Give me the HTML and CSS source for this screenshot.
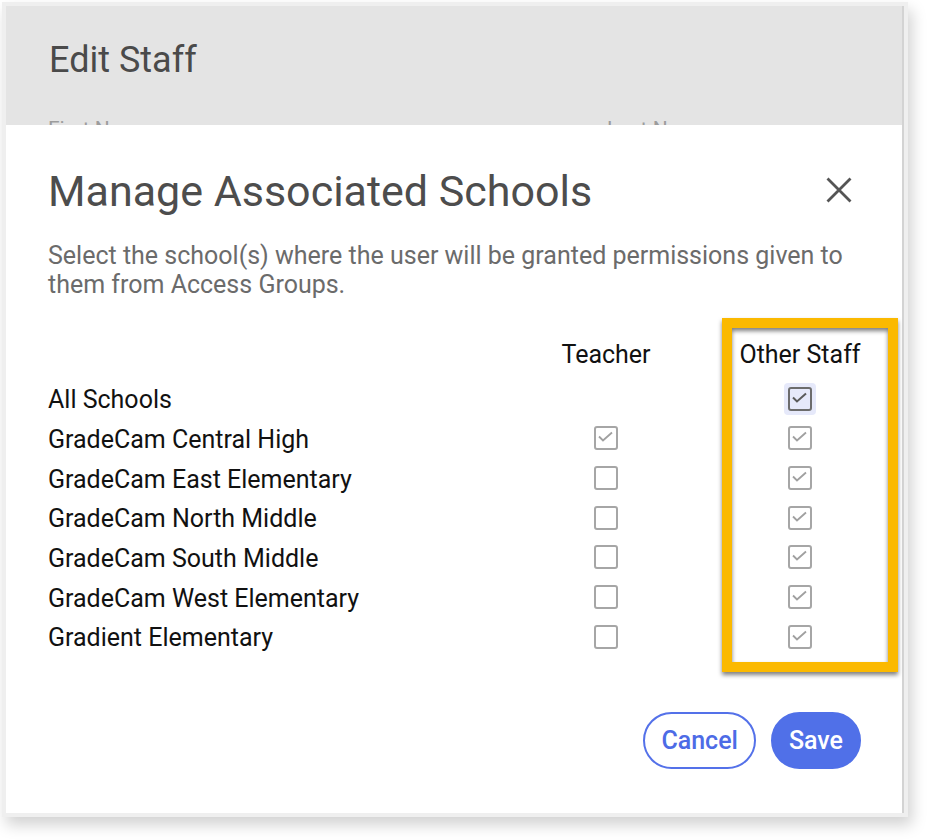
FILE: index.html
```html
<!DOCTYPE html>
<html lang="en">
<head>
<meta charset="utf-8">
<title>Manage Associated Schools</title>
<link rel="stylesheet" href="styles.css">
</head>
<body>
<div class="frame">
  <div class="screen">
    <div class="backdrop">
      <h1 class="bg-title">Edit Staff</h1>
      <div class="bg-fields"><span>First Name</span><span>Last Name</span></div>
    </div>
    <div class="modal">
      <div class="modal-head">
        <h2 class="modal-title">Manage Associated Schools</h2>
        <button class="close" aria-label="Close">
          <svg viewBox="0 0 26 26" width="26" height="26"><path d="M1.5 1.5 L24.5 24.5 M24.5 1.5 L1.5 24.5" stroke="#555" stroke-width="2.8" fill="none"/></svg>
        </button>
      </div>
      <p class="desc">Select the school(s) where the user will be granted permissions given to<br>them from Access Groups.</p>
      <div class="table">
        <div class="row head-row">
          <span></span>
          <span class="col-hdr">Teacher</span>
          <span class="col-hdr">Other Staff</span>
        </div>
        <div class="row">
          <span class="label">All Schools</span>
          <span class="cell"></span>
          <span class="cell"><span class="focus"><span class="cb dark"><svg viewBox="0 0 19 19"><path d="M3 8.5 L7 12.5 L16 4.5"/></svg></span></span></span>
        </div>
        <div class="row">
          <span class="label">GradeCam Central High</span>
          <span class="cell"><span class="cb"><svg viewBox="0 0 19 19"><path d="M3 8.5 L7 12.5 L16 4.5"/></svg></span></span>
          <span class="cell"><span class="cb"><svg viewBox="0 0 19 19"><path d="M3 8.5 L7 12.5 L16 4.5"/></svg></span></span>
        </div>
        <div class="row">
          <span class="label">GradeCam East Elementary</span>
          <span class="cell"><span class="cb"></span></span>
          <span class="cell"><span class="cb"><svg viewBox="0 0 19 19"><path d="M3 8.5 L7 12.5 L16 4.5"/></svg></span></span>
        </div>
        <div class="row">
          <span class="label">GradeCam North Middle</span>
          <span class="cell"><span class="cb"></span></span>
          <span class="cell"><span class="cb"><svg viewBox="0 0 19 19"><path d="M3 8.5 L7 12.5 L16 4.5"/></svg></span></span>
        </div>
        <div class="row">
          <span class="label">GradeCam South Middle</span>
          <span class="cell"><span class="cb"></span></span>
          <span class="cell"><span class="cb"><svg viewBox="0 0 19 19"><path d="M3 8.5 L7 12.5 L16 4.5"/></svg></span></span>
        </div>
        <div class="row">
          <span class="label">GradeCam West Elementary</span>
          <span class="cell"><span class="cb"></span></span>
          <span class="cell"><span class="cb"><svg viewBox="0 0 19 19"><path d="M3 8.5 L7 12.5 L16 4.5"/></svg></span></span>
        </div>
        <div class="row">
          <span class="label">Gradient Elementary</span>
          <span class="cell"><span class="cb"></span></span>
          <span class="cell"><span class="cb"><svg viewBox="0 0 19 19"><path d="M3 8.5 L7 12.5 L16 4.5"/></svg></span></span>
        </div>
      </div>
      <div class="actions">
        <button class="btn btn-outline">Cancel</button>
        <button class="btn btn-primary">Save</button>
      </div>
    </div>
  </div>
</div>
<div class="highlight"></div>
</body>
</html>
```

FILE: styles.css
```css
html, body {
  margin: 0;
  padding: 0;
  background: #ffffff;
}
body {
  font-family: Roboto, "Noto Sans", "Liberation Sans", sans-serif;
  position: relative;
  width: 930px;
  height: 840px;
  overflow: hidden;
}
.frame {
  margin: 2px;
  width: 906px;
  height: 815px;
  box-sizing: border-box;
  border: 4px solid #efefef;
  box-shadow: 4px 8px 14px rgba(0, 0, 0, 0.18);
}
.screen {
  height: 100%;
  box-sizing: border-box;
  border-right: 2px solid #d3d3d3;
  display: flex;
  flex-direction: column;
  background: #ffffff;
}
.backdrop {
  height: 119px;
  flex: none;
  overflow: hidden;
  background: #e4e4e4;
  padding: 32px 0 0 43px;
  box-sizing: border-box;
}
.bg-title {
  margin: 0;
  font-size: 36px;
  line-height: 44px;
  font-weight: 400;
  color: #4a4a4a;
}
.bg-fields {
  margin-top: 35px;
  margin-left: -1px;
  display: grid;
  grid-template-columns: 559px 1fr;
  font-size: 21px;
  line-height: 24px;
  color: #9c9c9c;
}
.modal {
  flex: 1;
  padding: 42px 32px 44px 42px;
  display: flex;
  flex-direction: column;
}
.modal-head {
  display: flex;
  align-items: center;
  justify-content: space-between;
}
.modal-title {
  margin: 0;
  font-size: 43px;
  line-height: 48px;
  font-weight: 400;
  color: #4d4d4d;
}
.close {
  width: 40px;
  height: 40px;
  margin-right: 11px;
  margin-top: -3px;
  padding: 0;
  border: none;
  background: none;
  display: flex;
  align-items: center;
  justify-content: center;
}
.desc {
  margin: 26px 0 0;
  font-size: 25px;
  line-height: 29px;
  color: #6b6b6b;
  white-space: nowrap;
}
.table {
  margin-top: 35px;
}
.row {
  display: grid;
  grid-template-columns: 1fr 140px 140px;
  column-gap: 54px;
  align-items: center;
  height: 39.67px;
}
.head-row {
  height: 40px;
  margin-bottom: 5px;
}
.col-hdr {
  text-align: center;
  font-size: 25px;
  color: #111111;
}
.label {
  font-size: 25px;
  color: #111111;
  padding-top: 2px;
}
.cell {
  display: flex;
  justify-content: center;
  align-items: center;
}
.cb {
  width: 24px;
  height: 24px;
  box-sizing: border-box;
  border: 2.5px solid #a6a6a6;
  border-radius: 3px;
  display: block;
}
.cb svg {
  display: block;
  width: 19px;
  height: 19px;
  fill: none;
  stroke: #a0a0a0;
  stroke-width: 1.8;
}
.focus {
  display: block;
  padding: 4px;
  border-radius: 4px;
  background: #e6e9fa;
}
.cb.dark {
  border-color: #6c6c6c;
}
.cb.dark svg {
  stroke: #5a5a5a;
  stroke-width: 2;
}
.actions {
  margin-top: 55px;
  margin-right: 9px;
  display: flex;
  justify-content: flex-end;
  gap: 15px;
}
.btn {
  height: 57px;
  padding: 0 16px;
  border-radius: 29px;
  border: 2px solid #5471e9;
  font-family: Roboto, "Noto Sans", "Liberation Sans", sans-serif;
  font-size: 25px;
  font-weight: 500;
}
.btn-outline {
  background: #ffffff;
  color: #4d6be6;
}
.btn-primary {
  background: #5070e8;
  border-color: #5070e8;
  color: #ffffff;
}
.highlight {
  position: absolute;
  left: 722px;
  top: 318px;
  width: 176px;
  height: 354px;
  box-sizing: border-box;
  border: 10px solid #fbb900;
  filter: drop-shadow(0 3px 2px rgba(0, 0, 0, 0.5));
}
```
